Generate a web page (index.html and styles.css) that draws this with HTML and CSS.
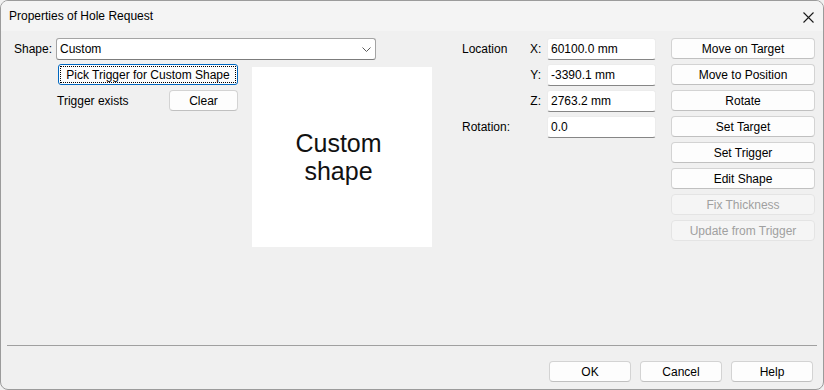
FILE: index.html
```html
<!DOCTYPE html>
<html lang="en">
<head>
    <meta charset="UTF-8">
    <title>Properties of Hole Request</title>
    <link rel="stylesheet" href="styles.css">
</head>
<body>

<div class="dialog">
    <div class="titlebar">
        <span class="title">Properties of Hole Request</span>
        <svg class="close" width="11" height="11" viewBox="0 0 11 11">
            <path d="M0.5 0.5 L10.5 10.5 M10.5 0.5 L0.5 10.5" stroke="#1b1b1b" stroke-width="1.1" fill="none"/>
        </svg>
    </div>

    <div class="main">
        <div class="shape-panel">
            <div class="shape-row">
                <span class="shape-label">Shape:</span>
                <div class="combo">
                    <span>Custom</span>
                    <svg class="chevron" width="9" height="5" viewBox="0 0 9 5">
                        <path d="M0.5 0.5 L4.5 4.5 L8.5 0.5" stroke="#5a5a5a" stroke-width="1" fill="none"/>
                    </svg>
                </div>
            </div>
            <div class="shape-body">
                <div class="trigger">
                    <button class="btn btn-focus"><span class="focus-ring">Pick Trigger for Custom Shape</span></button>
                    <div class="trigger-row">
                        <span>Trigger exists</span>
                        <button class="btn btn-clear">Clear</button>
                    </div>
                </div>
                <div class="preview">Custom<br>shape</div>
            </div>
        </div>

        <div class="location">
            <span class="caption">Location</span>
            <span class="axis">X:</span>
            <div class="field">60100.0 mm</div>

            <span class="axis axis-y">Y:</span>
            <div class="field">-3390.1 mm</div>

            <span class="axis axis-z">Z:</span>
            <div class="field">2763.2 mm</div>

            <span class="caption caption-wide">Rotation:</span>
            <div class="field">0.0</div>
        </div>

        <div class="actions">
            <button class="btn">Move on Target</button>
            <button class="btn">Move to Position</button>
            <button class="btn">Rotate</button>
            <button class="btn">Set Target</button>
            <button class="btn">Set Trigger</button>
            <button class="btn">Edit Shape</button>
            <button class="btn" disabled>Fix Thickness</button>
            <button class="btn" disabled>Update from Trigger</button>
        </div>
    </div>

    <hr class="separator">

    <div class="footer">
        <button class="btn">OK</button>
        <button class="btn">Cancel</button>
        <button class="btn">Help</button>
    </div>
</div>

</body>
</html>
```

FILE: styles.css
```css
html, body {
    margin: 0;
    padding: 0;
    background: #f0f0f0;
}

body {
    font-family: "Liberation Sans", Arial, sans-serif;
    font-size: 12px;
    color: #000;
}

.dialog {
    box-sizing: border-box;
    width: 824px;
    height: 390px;
    display: flex;
    flex-direction: column;
    border: 1px solid #9b9b9b;
    border-radius: 8px;
    background: #f0f0f0;
    overflow: hidden;
}

.titlebar {
    height: 30px;
    flex: none;
    display: flex;
    align-items: center;
    padding: 0 9px 0 8px;
    background: #f4f4f4;
}

.title {
    flex: 1;
}

.close {
    margin-top: 2px;
}

.main {
    flex: 1;
    display: flex;
    align-items: flex-start;
    padding: 7px 0 0 13px;
}

/* Shape */
.shape-panel {
    width: 418px;
    flex: none;
}

.shape-row {
    display: flex;
    align-items: center;
    height: 22px;
}

.shape-label {
    width: 42px;
}

.combo {
    box-sizing: border-box;
    width: 320px;
    height: 22px;
    display: flex;
    align-items: center;
    justify-content: space-between;
    padding: 0 4px 0 3px;
    background: #fff;
    border: 1px solid #a4a4a4;
    border-bottom-color: #7c7c7c;
    border-radius: 3px;
}

.shape-body {
    display: flex;
    align-items: flex-start;
    margin: 4px 0 0 44px;
}

.trigger {
    width: 180px;
}

.trigger-row {
    display: flex;
    align-items: center;
    justify-content: space-between;
    margin: 5px 0 0 -1px;
}

.btn-clear {
    width: 69px;
}

.preview {
    box-sizing: border-box;
    width: 180px;
    height: 180px;
    flex: none;
    margin: 3px 0 0 14px;
    padding-right: 7px;
    display: flex;
    align-items: center;
    justify-content: center;
    text-align: center;
    background: #fff;
    font-size: 25px;
    line-height: 28px;
    color: #111;
}

/* Location */
.location {
    width: 194px;
    flex: none;
    margin-left: 30px;
    display: grid;
    grid-template-columns: 68px 17px 109px;
    grid-auto-rows: 22px;
    row-gap: 4px;
    align-items: center;
}

.axis {
    grid-column: 2;
    text-align: right;
    padding-right: 6px;
}

.caption-wide {
    grid-column: 1 / span 2;
}

.field {
    grid-column: 3;
    box-sizing: border-box;
    height: 22px;
    display: flex;
    align-items: center;
    padding-left: 3px;
    background: #fff;
    border: 1px solid #ececec;
    border-bottom-color: #868686;
    border-radius: 3px;
}

/* Buttons */
.actions {
    width: 144px;
    flex: none;
    margin-left: 15px;
    display: flex;
    flex-direction: column;
    gap: 5px;
}

.btn {
    box-sizing: border-box;
    height: 21px;
    padding: 0;
    font-family: inherit;
    font-size: 12px;
    color: #000;
    background: #fdfdfd;
    border: 1px solid #d3d3d3;
    border-bottom-color: #c0c0c0;
    border-radius: 4px;
}

.btn:disabled {
    color: #a0a0a0;
    background: #f5f5f5;
    border-color: #e4e4e4;
}

.btn-focus {
    width: 180px;
    display: flex;
    padding: 1px;
    border-color: #0067c0;
    border-radius: 3px;
}

.focus-ring {
    flex: 1;
    display: flex;
    align-items: center;
    justify-content: center;
    border: 1px dotted #000;
}

.separator {
    height: 0;
    margin: 0 6px;
    border: none;
    border-top: 1px solid #a0a0a0;
}

.footer {
    display: flex;
    justify-content: flex-end;
    gap: 9px;
    padding: 15px 10px 7px;
}

.footer .btn {
    width: 82px;
}
```
